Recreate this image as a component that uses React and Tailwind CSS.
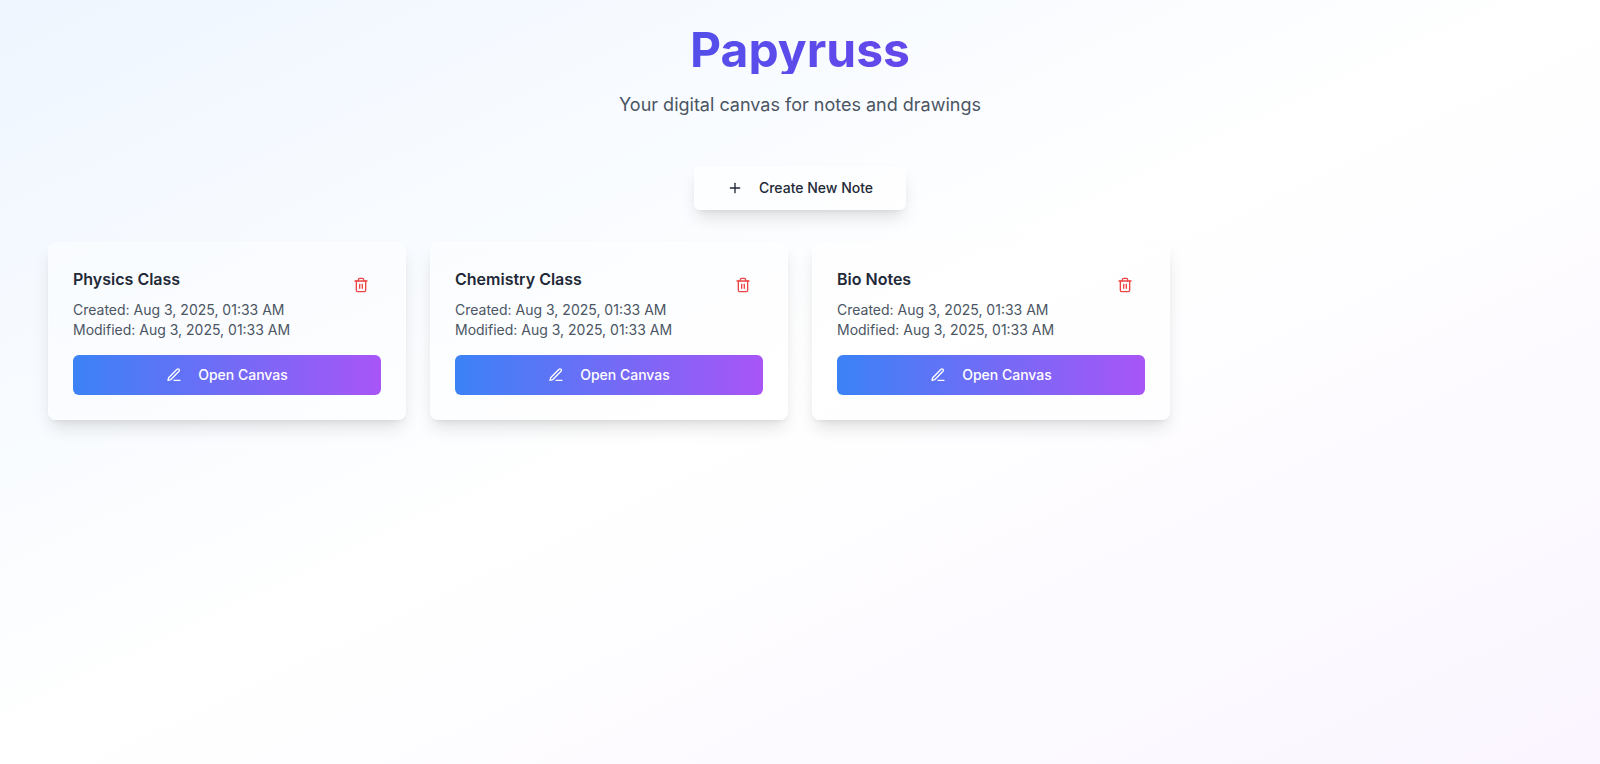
import { Plus, Trash2 } from "lucide-react";

const notes = [
  { id: 1, title: "Physics Class", created: "Aug 3, 2025, 01:33 AM", modified: "Aug 3, 2025, 01:33 AM" },
  { id: 2, title: "Chemistry Class", created: "Aug 3, 2025, 01:33 AM", modified: "Aug 3, 2025, 01:33 AM" },
  { id: 3, title: "Bio Notes", created: "Aug 3, 2025, 01:33 AM", modified: "Aug 3, 2025, 01:33 AM" },
];

function PenIcon({ className }) {
  return (
    <svg
      viewBox="0 0 24 24"
      fill="none"
      stroke="currentColor"
      strokeWidth="2"
      strokeLinecap="round"
      strokeLinejoin="round"
      aria-hidden="true"
      className={className}
    >
      <path d="M12 20h9" />
      <path d="M16.5 3.5a2.12 2.12 0 0 1 3 3L7 19l-4 1 1-4Z" />
    </svg>
  );
}

function NoteCard({ note }) {
  return (
    <article className="rounded-lg border border-white/20 bg-white/40 p-6 shadow-[0_10px_18px_-3px_rgb(0_0_0/0.12),0_4px_6px_-4px_rgb(0_0_0/0.1)]">
      <div className="flex items-start justify-between">
        <div>
          <h2 className="mb-[9px] text-base font-semibold text-[#1f2937]">{note.title}</h2>
          <div className="text-sm text-[#4b5563]">
            <p>Created: {note.created}</p>
            <p>Modified: {note.modified}</p>
          </div>
        </div>
        <button
          type="button"
          aria-label={`Delete ${note.title}`}
          className="flex h-9 w-10 items-center justify-center rounded-md text-[#ef4444]"
        >
          <Trash2 className="size-4" />
        </button>
      </div>
      <button
        type="button"
        className="mt-[15px] flex h-10 w-full items-center justify-center gap-4 rounded-md bg-linear-to-r/srgb from-[#3b82f6] to-[#a855f7] text-sm font-medium text-white"
      >
        <PenIcon className="size-4" />
        Open Canvas
      </button>
    </article>
  );
}

export default function App() {
  return (
    <div className="min-h-screen bg-linear-to-br/srgb from-[#eff6ff] via-white to-[#faf5ff] px-12 font-['Inter',sans-serif]">
      <header className="pt-[26px] text-center">
        <h1 className="bg-linear-to-r/srgb from-[#2563eb] to-[#9333ea] bg-clip-text text-5xl font-bold text-transparent">
          Papyruss
        </h1>
        <p className="mt-[17px] text-lg text-[#4b5563]">Your digital canvas for notes and drawings</p>
        <button
          type="button"
          className="mx-auto mt-[47px] flex h-11 items-center gap-4 rounded-md border border-white/20 bg-white/50 px-8 text-sm font-medium text-[#1f2937] shadow-[0_10px_18px_-3px_rgb(0_0_0/0.12),0_4px_6px_-4px_rgb(0_0_0/0.1)]"
        >
          <Plus className="size-4" />
          Create New Note
        </button>
      </header>
      <main className="mt-8 grid grid-cols-1 gap-6 sm:grid-cols-2 lg:grid-cols-4">
        {notes.map((note) => (
          <NoteCard key={note.id} note={note} />
        ))}
      </main>
    </div>
  );
}
